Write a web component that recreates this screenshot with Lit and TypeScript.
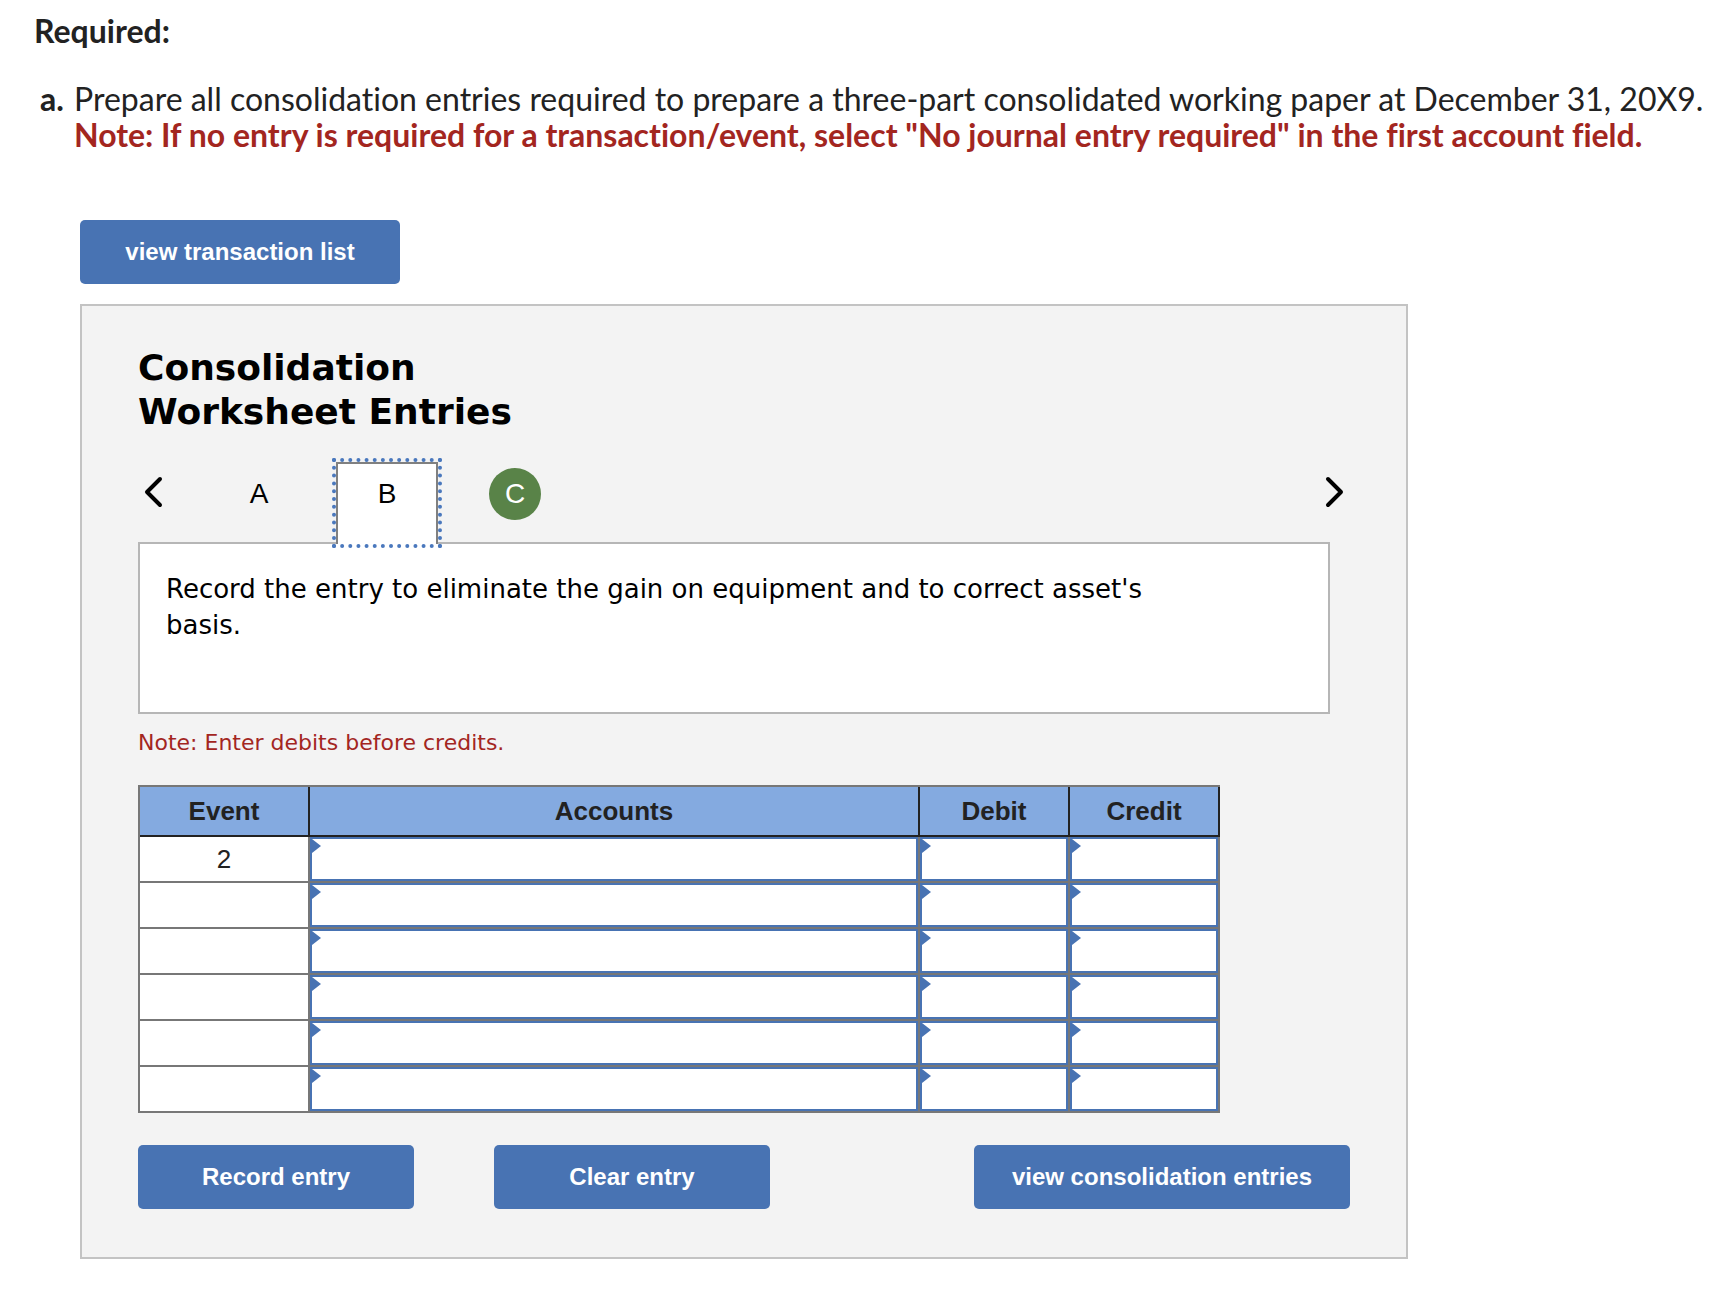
import { LitElement, html, css, svg } from "lit";
import { customElement, state } from "lit/decorators.js";
import { classMap } from "lit/directives/class-map.js";

interface EntryTab {
  id: string;
  done: boolean;
}

const TABS: EntryTab[] = [
  { id: "A", done: false },
  { id: "B", done: false },
  { id: "C", done: true },
];

const EVENTS = ["2", "", "", "", "", ""];
const FIELDS = ["Accounts", "Debit", "Credit"];

@customElement("entry-table")
export class EntryTable extends LitElement {
  static styles = css`
    :host {
      display: block;
      font-family: "Liberation Sans", Arial, sans-serif;
      font-size: 26px;
      line-height: 30px;
      color: #222;
    }
    .grid {
      width: 100%;
      table-layout: fixed;
      border-collapse: separate;
      border-spacing: 0;
      border: solid #777;
      border-width: 2px 0 0 2px;
      background: #fff;
    }
    .col-event {
      width: 170px;
    }
    .col-amount {
      width: 150px;
    }
    .head {
      box-sizing: border-box;
      height: 50px;
      padding: 0;
      border: solid #222;
      border-width: 0 2px 2px 0;
      background: #84aae0;
      font-weight: bold;
      text-align: center;
    }
    .cell {
      box-sizing: border-box;
      height: 46px;
      padding: 0;
      border: solid #777;
      border-width: 0 2px 2px 0;
      text-align: center;
    }
    .slot {
      position: relative;
      display: block;
    }
    .slot::before {
      content: "";
      position: absolute;
      left: 2px;
      top: 2px;
      width: 9px;
      height: 14px;
      background: #4873b3;
      clip-path: polygon(0 0, 100% 50%, 0 100%);
    }
    .field {
      display: block;
      box-sizing: border-box;
      width: 100%;
      height: 44px;
      margin: 0;
      padding: 0 12px;
      border: 2px solid #4873b3;
      border-radius: 0;
      background: #fff;
      color: inherit;
      font: inherit;
      outline: none;
    }
    .amount {
      text-align: right;
    }
  `;

  render() {
    return html`
      <table class="grid">
        <colgroup>
          <col class="col-event" />
          <col />
          <col class="col-amount" />
          <col class="col-amount" />
        </colgroup>
        <thead>
          <tr>
            ${["Event", ...FIELDS].map((h) => html`<th class="head" scope="col">${h}</th>`)}
          </tr>
        </thead>
        <tbody>
          ${EVENTS.map(
            (event, i) => html`
              <tr>
                <td class="cell">${event}</td>
                ${FIELDS.map(
                  (name) => html`
                    <td class="cell">
                      <label class="slot">
                        <input
                          class=${classMap({ field: true, amount: name !== "Accounts" })}
                          type="text"
                          aria-label="${name}, row ${i + 1}"
                        />
                      </label>
                    </td>
                  `
                )}
              </tr>
            `
          )}
        </tbody>
      </table>
    `;
  }
}

@customElement("app-root")
export class AppRoot extends LitElement {
  static styles = css`
    :host {
      display: block;
      background: #fff;
      color: #222;
      font-family: Lato, sans-serif;
      font-size: 32px;
      line-height: 36px;
      font-variant-ligatures: none;
    }
    .page {
      padding: 13px 16px 56px 34px;
    }
    .required {
      margin: 0 0 32px;
      font-size: inherit;
      font-weight: bold;
    }
    .task {
      display: grid;
      grid-template-columns: 34px 1fr;
      padding-left: 6px;
    }
    .letter {
      font-weight: bold;
    }
    .text {
      margin: 0;
    }
    .warn {
      display: block;
      color: #a3261f;
      font-weight: bold;
    }
    .work {
      display: flex;
      flex-direction: column;
      align-items: flex-start;
      gap: 20px;
      max-width: 1328px;
      margin: 67px 0 0 46px;
    }
    .btn {
      box-sizing: border-box;
      min-width: 276px;
      height: 64px;
      padding: 0 38px;
      border: 0;
      border-radius: 5px;
      background: #4873b3;
      color: #fff;
      font: bold 24px/28px "Liberation Sans", Arial, sans-serif;
      cursor: pointer;
    }
    .list {
      min-width: 320px;
    }
    .panel {
      box-sizing: border-box;
      width: 100%;
      padding: 40px 56px 48px;
      border: 2px solid #c3c3c3;
      background: #f3f3f3;
      color: #000;
    }
    .title {
      max-width: 400px;
      margin: 0;
      font: bold 36px/44px "DejaVu Sans", Verdana, sans-serif;
    }
    .tabs {
      display: flex;
      align-items: flex-start;
      height: 80px;
      margin-top: 28px;
    }
    .tab {
      display: flex;
      align-items: center;
      justify-content: center;
      box-sizing: border-box;
      width: 102px;
      height: 82px;
      margin-right: 26px;
      padding: 0 0 18px;
      border: 0;
      background: none;
      color: #000;
      font: 28px/32px "Liberation Sans", Arial, sans-serif;
      cursor: pointer;
    }
    .current {
      position: relative;
      padding-bottom: 20px;
      border: 2px solid #808080;
      border-bottom: 0;
      background: #fff;
      outline: 4px dotted #4a78bd;
    }
    .badge {
      display: flex;
      align-items: center;
      justify-content: center;
      width: 52px;
      height: 52px;
      border-radius: 50%;
    }
    .done {
      background: #598348;
      color: #fff;
    }
    .arrow {
      display: flex;
      padding: 14px 0;
      border: 0;
      background: none;
      color: #000;
      cursor: pointer;
    }
    .prev {
      margin: 0 44px 0 6px;
    }
    .next {
      margin: 0 6px 0 auto;
    }
    .prompt {
      box-sizing: border-box;
      min-height: 172px;
      margin-right: 20px;
      padding: 27px 170px 26px 26px;
      border: 2px solid #b6b6b6;
      background: #fff;
      font: 26px/36px "DejaVu Sans", Verdana, sans-serif;
    }
    .hint {
      margin: 14px 0 28px;
      color: #a3261f;
      font: 22px/29px "DejaVu Sans", Verdana, sans-serif;
    }
    .entries {
      max-width: 1082px;
    }
    .actions {
      display: flex;
      gap: 80px;
      margin-top: 32px;
    }
    .view {
      margin-left: auto;
    }
  `;

  @state() private current = 1;

  private move(step: number) {
    this.current = Math.min(TABS.length - 1, Math.max(0, this.current + step));
  }

  private chevron(d: string) {
    return html`
      <svg width="20" height="32" viewBox="0 0 20 32" aria-hidden="true">
        ${svg`<path d=${d} fill="none" stroke="currentColor" stroke-width="4" stroke-linecap="round" stroke-linejoin="round" />`}
      </svg>
    `;
  }

  render() {
    return html`
      <main class="page">
        <h2 class="required">Required:</h2>
        <div class="task">
          <span class="letter">a.</span>
          <p class="text">
            Prepare all consolidation entries required to prepare a three-part consolidated working paper at December 31, 20X9.
            <strong class="warn">Note: If no entry is required for a transaction/event, select "No journal entry required" in the first account field.</strong>
          </p>
        </div>
        <div class="work">
          <button class="btn list" type="button">view transaction list</button>
          <section class="panel">
            <h1 class="title">Consolidation Worksheet Entries</h1>
            <nav class="tabs">
              <button class="arrow prev" type="button" aria-label="Previous" @click=${() => this.move(-1)}>
                ${this.chevron("M16 3 3 16 16 29")}
              </button>
              ${TABS.map(
                (tab, i) => html`
                  <button
                    class=${classMap({ tab: true, current: i === this.current })}
                    type="button"
                    @click=${() => (this.current = i)}
                  >
                    <span class=${classMap({ badge: true, done: tab.done })}>${tab.id}</span>
                  </button>
                `
              )}
              <button class="arrow next" type="button" aria-label="Next" @click=${() => this.move(1)}>
                ${this.chevron("M4 3 17 16 4 29")}
              </button>
            </nav>
            <div class="prompt">Record the entry to eliminate the gain on equipment and to correct asset's basis.</div>
            <p class="hint">Note: Enter debits before credits.</p>
            <entry-table class="entries"></entry-table>
            <div class="actions">
              <button class="btn" type="button">Record entry</button>
              <button class="btn" type="button">Clear entry</button>
              <button class="btn view" type="button">view consolidation entries</button>
            </div>
          </section>
        </div>
      </main>
    `;
  }
}
